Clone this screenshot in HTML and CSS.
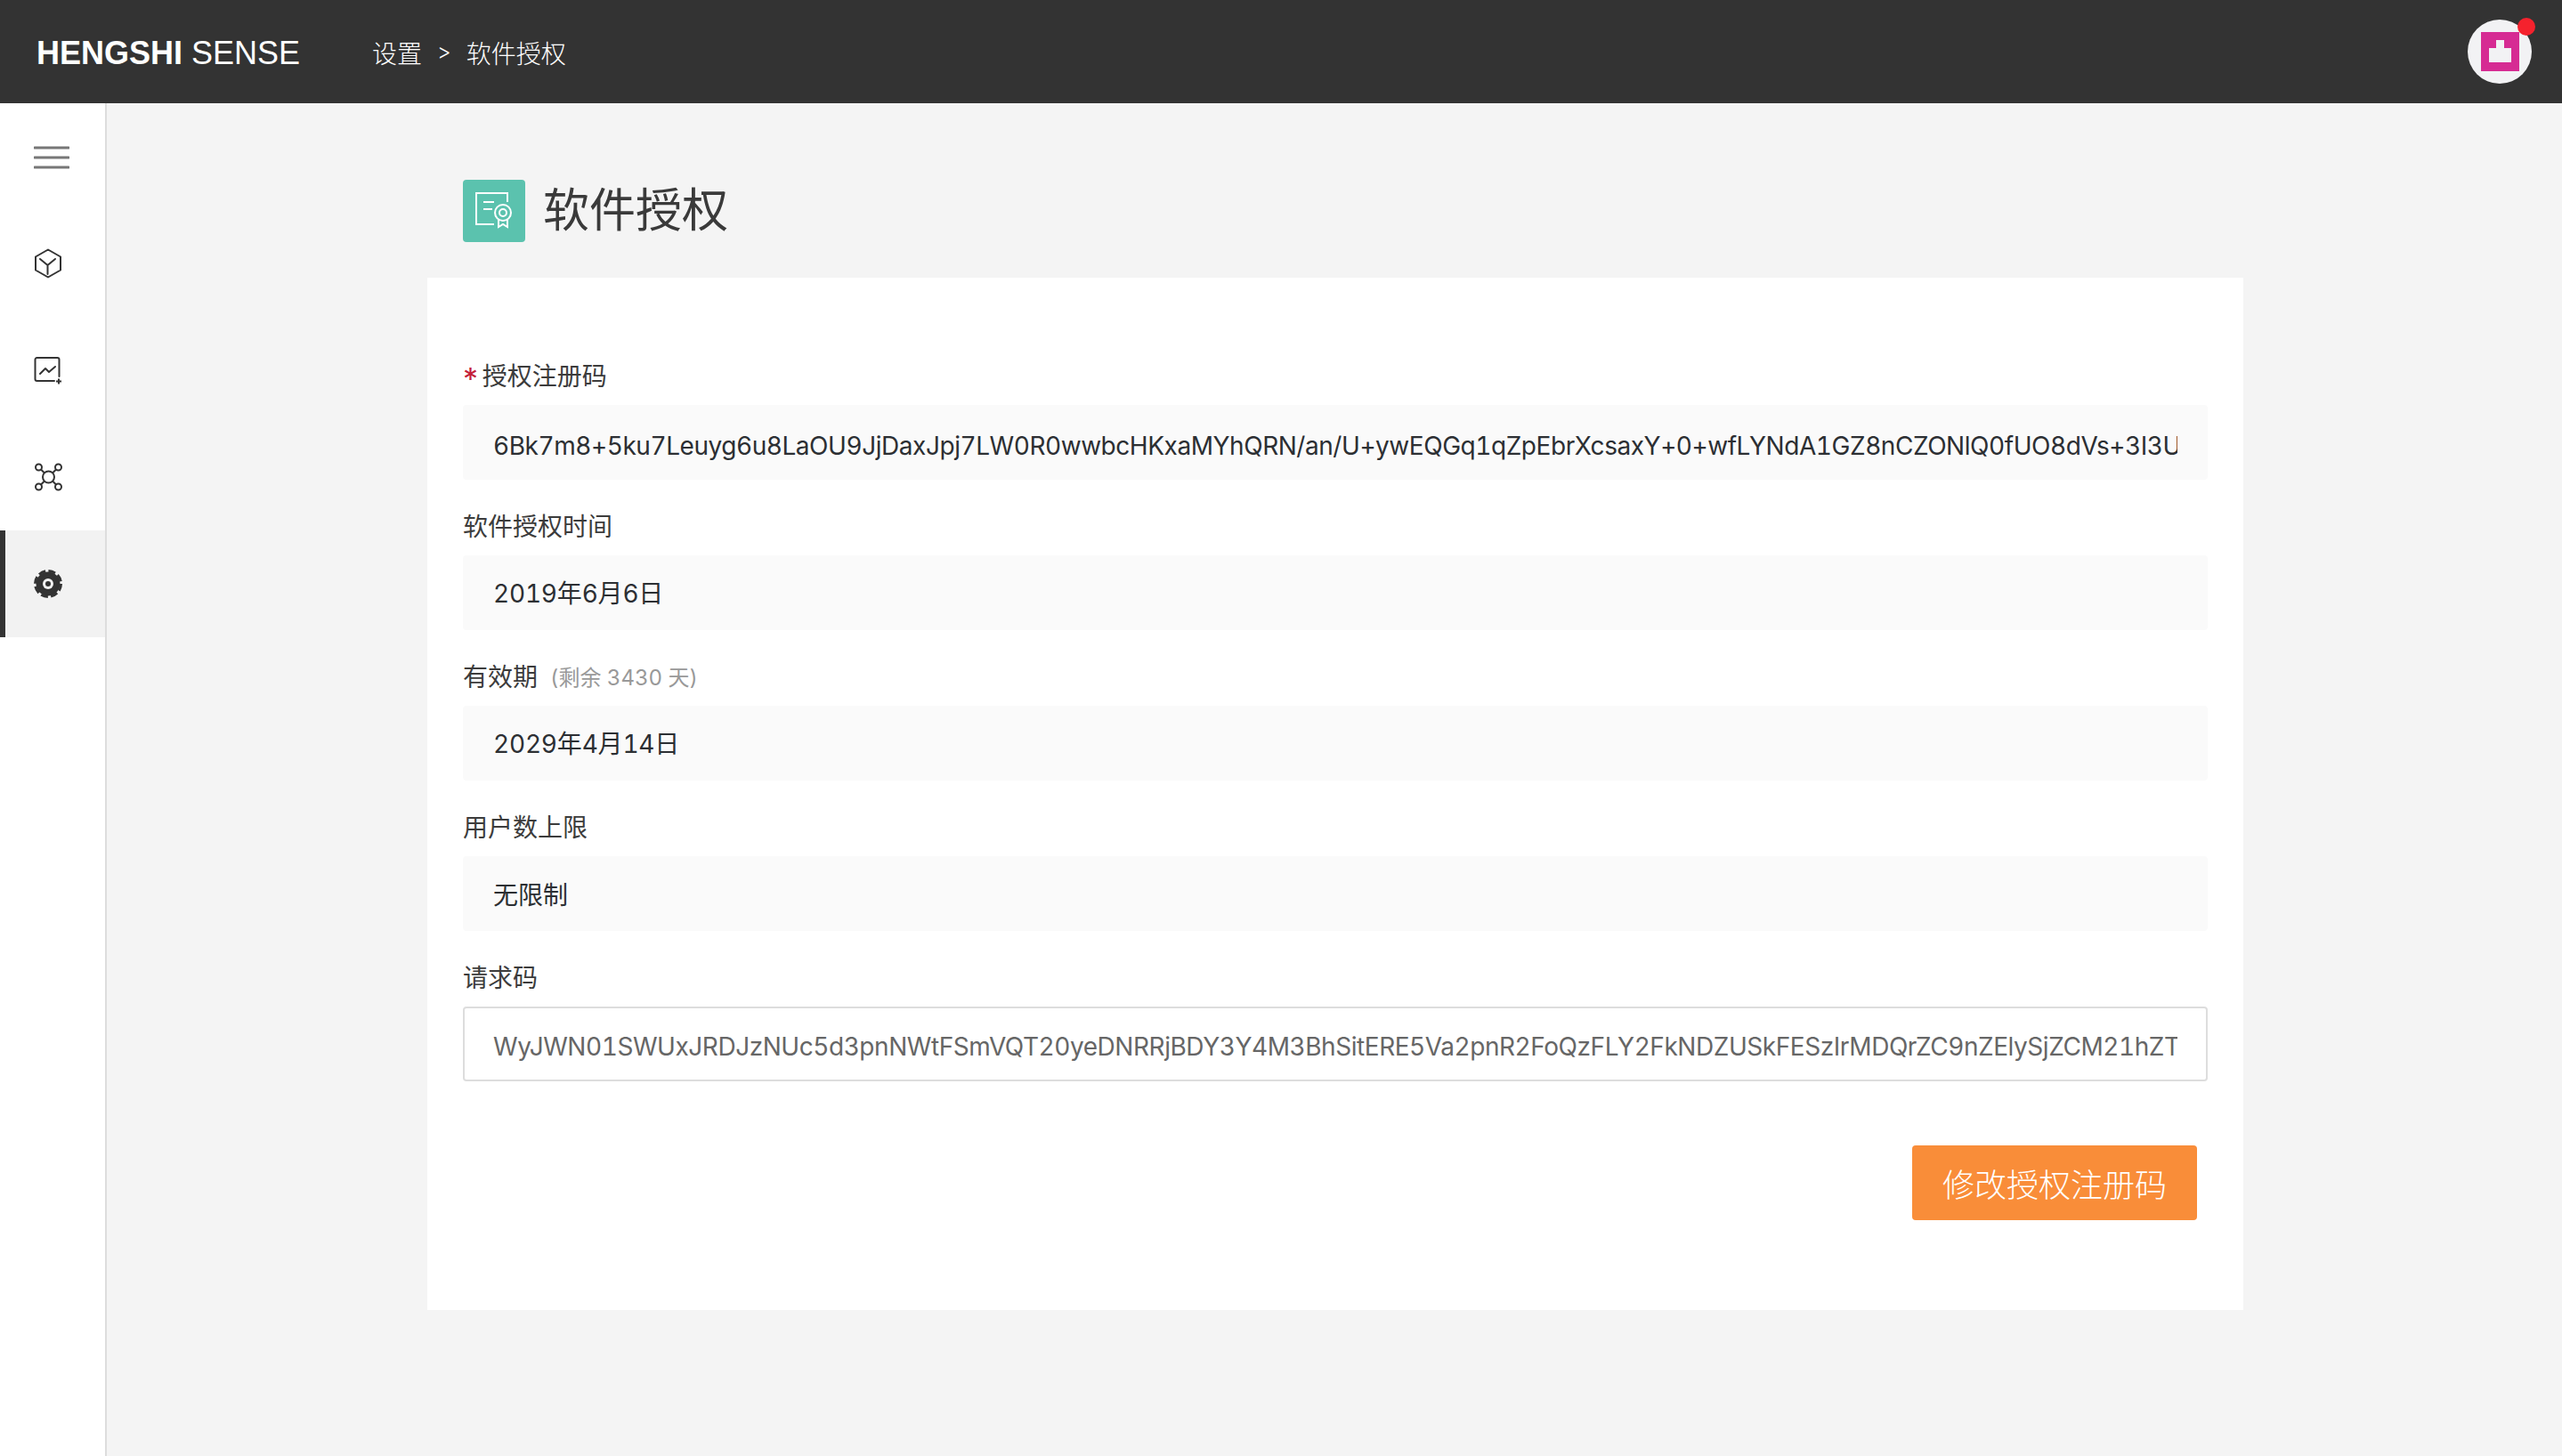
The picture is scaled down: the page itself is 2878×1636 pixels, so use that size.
FILE: index.html
```html
<!DOCTYPE html>
<html lang="zh-CN">
<head>
<meta charset="utf-8">
<title>软件授权</title>
<link rel="stylesheet" href="styles.css">
</head>
<body>
<header class="topbar">
  <div class="brand"><b>HENGSHI</b> SENSE</div>
  <nav class="crumbs"><span>设置</span><span class="sep">&gt;</span><span>软件授权</span></nav>
  <div class="avatar">
    <svg class="avatar-mark" viewBox="0 0 43 44"><rect width="43" height="44" fill="#d62b93"/><path d="M9 18h8V9h9v9h8v16H9z" fill="#f2f2f4"/></svg>
    <i class="dot"></i>
  </div>
</header>
<div class="body">
  <aside class="sidebar">
    <div class="nav-item">
      <svg class="icon" viewBox="0 0 40 36" width="40" height="36"><path d="M1 8h38M1 19h38M1 30h38" stroke="#777" stroke-width="3" stroke-linecap="round" fill="none"/></svg>
    </div>
    <div class="nav-item">
      <svg class="icon" viewBox="0 0 34 34" width="34" height="34"><path d="M16 1.500 30 9.500v15L16 32.500 2 24.500v-15z M15.500 19 7 12M15.500 19 24 12M15.500 19v10" stroke="#333" stroke-width="2" stroke-linejoin="round" stroke-linecap="round" fill="none"/></svg>
    </div>
    <div class="nav-item">
      <svg class="icon" viewBox="0 0 34 34" width="34" height="34"><path d="M28.500 24V5a2 2 0 0 0-2-2H3.500a2 2 0 0 0-2 2v22a2 2 0 0 0 2 2H23" stroke="#333" stroke-width="2" stroke-linecap="round" fill="none"/><path d="M7 21l6-6 4 4 7-6" stroke="#333" stroke-width="2" stroke-linecap="round" stroke-linejoin="round" fill="none"/><path d="M25 29.500h6M28 26.500v6" stroke="#333" stroke-width="2" fill="none"/></svg>
    </div>
    <div class="nav-item">
      <svg class="icon" viewBox="0 0 34 36" width="34" height="36"><g stroke="#333" stroke-width="2" fill="none"><circle cx="16.500" cy="18" r="6.500"/><circle cx="5.500" cy="7" r="3.500"/><circle cx="27.500" cy="7" r="3.500"/><circle cx="5.500" cy="29" r="3.500"/><circle cx="27.500" cy="29" r="3.500"/><path d="m8 9.500 4 4M25 9.500l-4 4M8 26.500l4-4M25 26.500l-4-4"/></g></svg>
    </div>
    <div class="nav-item active">
      <svg class="icon" viewBox="0 0 34 36" width="34" height="36"><circle cx="16" cy="18" r="13.500" fill="#333"/><circle cx="16" cy="18" r="14.500" fill="none" stroke="#333" stroke-width="3" stroke-dasharray="8 3.390"/><circle cx="16" cy="18" r="6" fill="#f2f2f2"/><circle cx="16" cy="18" r="3" fill="#333"/></svg>
    </div>
  </aside>
  <main class="content">
    <div class="page-title">
      <svg class="title-icon" viewBox="0 0 70 70" width="70" height="70"><rect width="70" height="70" rx="4" fill="#5bc2ae"/><g stroke="#fff" stroke-width="2" fill="none"><path d="M50 25V15H15v35h20"/><path d="M23 25h12M23 33h10"/><circle cx="45" cy="37" r="9"/><circle cx="45" cy="37" r="4"/><path d="M40 45v8l5-3 5 3v-8"/></g></svg>
      <h1 class="title-text">软件授权</h1>
    </div>
    <section class="card">
      <div class="field">
        <label class="label"><span class="req">*</span> 授权注册码</label>
        <input class="value long" readonly value="6Bk7m8+5ku7Leuyg6u8LaOU9JjDaxJpj7LW0R0wwbcHKxaMYhQRN/an/U+ywEQGq1qZpEbrXcsaxY+0+wfLYNdA1GZ8nCZONlQ0fUO8dVs+3I3UdQ2xk">
      </div>
      <div class="field">
        <label class="label">软件授权时间</label>
        <input class="value date" readonly value="2019年6月6日">
      </div>
      <div class="field">
        <label class="label">有效期<span class="hint">(剩余 3430 天)</span></label>
        <input class="value date" readonly value="2029年4月14日">
      </div>
      <div class="field">
        <label class="label">用户数上限</label>
        <input class="value" readonly value="无限制">
      </div>
      <div class="field">
        <label class="label">请求码</label>
        <input class="value code" readonly value="WyJWN01SWUxJRDJzNUc5d3pnNWtFSmVQT20yeDNRRjBDY3Y4M3BhSitERE5Va2pnR2FoQzFLY2FkNDZUSkFESzIrMDQrZC9nZElySjZCM21hZTdxUk9">
      </div>
      <div class="actions"><button class="primary" type="button">修改授权注册码</button></div>
    </section>
  </main>
</div>
</body>
</html>
```
FILE: styles.css
```css
* { box-sizing: border-box; }
html, body { margin: 0; height: 100%; }
body {
  display: flex;
  flex-direction: column;
  height: 1636px;
  overflow: hidden;
  background: #f4f4f4;
  color: #333;
  font-family: Inter, "Noto Sans CJK SC", sans-serif;
  font-size: 28px;
}
.topbar {
  display: flex;
  align-items: center;
  height: 116px;
  flex: none;
  padding: 0 34px 0 41px;
  background: #333;
  color: #fff;
}
.brand {
  padding-top: 3px;
  font-family: "Liberation Sans", sans-serif;
  font-size: 36px;
  white-space: nowrap;
}
.crumbs {
  display: flex;
  gap: 17px;
  margin-left: 81px;
  padding-top: 2px;
  font-family: "Noto Sans CJK SC", sans-serif;
  font-size: 28px;
  font-weight: 300;
  color: #fff;
}
.sep { font-family: Inter, sans-serif; font-size: 24px; line-height: 40px; }
.avatar {
  position: relative;
  display: flex;
  align-items: center;
  justify-content: center;
  width: 72px;
  height: 72px;
  margin-left: auto;
  border-radius: 50%;
  background: #f2f2f4;
}
.avatar-mark { display: block; width: 43px; height: 44px; }
.dot {
  position: absolute;
  top: -2px;
  right: -4px;
  width: 20px;
  height: 20px;
  border-radius: 50%;
  background: #f5222d;
}
.body { display: flex; flex: 1; min-height: 0; }
.sidebar {
  flex: none;
  width: 120px;
  background: #fff;
  border-right: 2px solid #ddd;
}
.nav-item {
  display: flex;
  align-items: center;
  height: 120px;
  padding-left: 38px;
}
.nav-item.active { background: #f2f2f2; box-shadow: inset 6px 0 0 #333; }
.icon { display: block; }
.content { flex: 1; padding: 86px 0 0 360px; }
.page-title {
  display: flex;
  align-items: center;
  gap: 20px;
  height: 70px;
  margin: 0 0 40px 40px;
}
.title-icon { display: block; flex: none; }
.title-text {
  margin: 0;
  padding-bottom: 10px;
  font-family: "Noto Sans CJK SC", sans-serif;
  font-size: 52px;
  font-weight: 400;
  color: #3a3a3a;
}
.card {
  width: 2040px;
  height: 1160px;
  padding: 91px 40px 0;
  background: #fff;
}
.field { margin-bottom: 33px; }
.label {
  display: block;
  height: 36px;
  margin-bottom: 16px;
  font-family: "Noto Sans CJK SC", sans-serif;
  font-size: 28px;
  line-height: 36px;
  color: #3c3c3c;
}
.req {
  color: #c41e3a;
  font-family: Inter, sans-serif;
  font-size: 34px;
  line-height: 0;
  letter-spacing: -1.5px;
  vertical-align: -5px;
}
.hint {
  margin-left: 14px;
  color: #999;
  font-family: Inter, "Noto Sans CJK SC", sans-serif;
  font-size: 24px;
  font-feature-settings: "tnum";
  vertical-align: 1px;
}
.value {
  display: block;
  width: 100%;
  height: 84px;
  padding: 0 34px;
  border: 0;
  border-radius: 4px;
  outline: 0;
  background: #fafafa;
  color: #2c2f33;
  font-family: Inter, "Noto Sans CJK SC", sans-serif;
  font-size: 28px;
  line-height: 40px;
  font-feature-settings: "tnum";
}
.value.date { padding-bottom: 2px; letter-spacing: -0.2px; }
.value.long { padding-top: 7px; letter-spacing: -0.45px; }
.value.code {
  padding: 6px 32px 0;
  border: 2px solid #ddd;
  background: #fff;
  color: #666;
  letter-spacing: -0.45px;
}
.actions { display: flex; justify-content: flex-end; padding: 39px 12px 0 0; }
.primary {
  width: 320px;
  height: 84px;
  padding: 0;
  border: 0;
  border-radius: 4px;
  background: #f98d39;
  color: #fff;
  font-family: "Noto Sans CJK SC", sans-serif;
  font-size: 36px;
  font-weight: 300;
}
```
